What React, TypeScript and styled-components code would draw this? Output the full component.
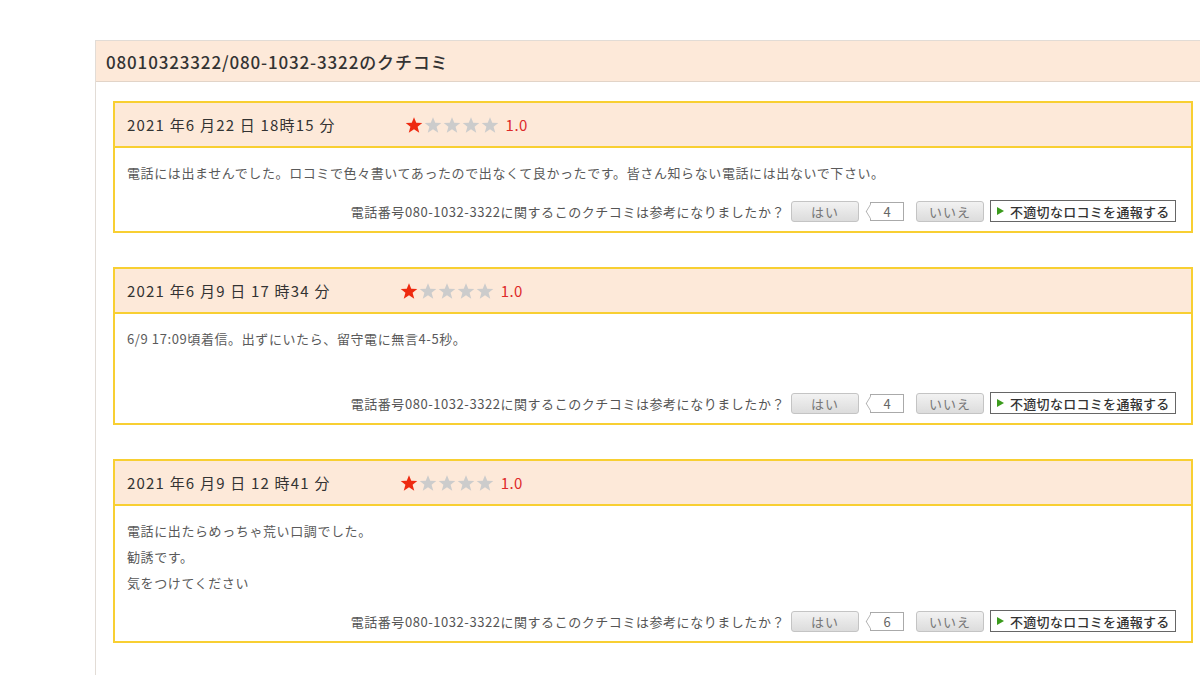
import React from 'react';
import styled, { createGlobalStyle } from 'styled-components';

const GlobalStyle = createGlobalStyle`
  html, body {
    margin: 0;
    padding: 0;
    background: #fff;
    overflow: hidden;
  }
  body {
    font-family: "Noto Sans CJK JP", "Noto Sans", sans-serif;
  }
`;

type Review = {
  date: string;
  score: number;
  lines: string[];
  count: number;
};

const reviews: Review[] = [
  {
    date: '2021 年6 月22 日 18時15 分',
    score: 1,
    lines: ['電話には出ませんでした。ロコミで色々書いてあったので出なくて良かったです。皆さん知らない電話には出ないで下さい。'],
    count: 4,
  },
  {
    date: '2021 年6 月9 日 17 時34 分',
    score: 1,
    lines: ['6/9 17:09頃着信。出ずにいたら、留守電に無言4-5秒。', ''],
    count: 4,
  },
  {
    date: '2021 年6 月9 日 12 時41 分',
    score: 1,
    lines: ['電話に出たらめっちゃ荒い口調でした。', '勧誘です。', '気をつけてください'],
    count: 6,
  },
];

function Star({ on }: { on: boolean }) {
  return (
    <StarIcon viewBox="0 0 24 24" $on={on}>
      <polygon points="12,1.5 15,9 23,9.3 16.8,14.3 19,22.3 12,17.8 5,22.3 7.2,14.3 1,9.3 9,9" />
    </StarIcon>
  );
}

function ReviewCard({ review }: { review: Review }) {
  return (
    <Card>
      <CardHeader>
        <DateText>{review.date}</DateText>
        <Stars>
          {[1, 2, 3, 4, 5].map((n) => (
            <Star key={n} on={n <= review.score} />
          ))}
        </Stars>
        <Score>{review.score.toFixed(1)}</Score>
      </CardHeader>
      <CardBody>
        {review.lines.map((line, i) => (
          <Line key={i}>{line || '\u00a0'}</Line>
        ))}
        <VoteRow>
          <Question>電話番号080-1032-3322に関するこのクチコミは参考になりましたか？</Question>
          <VoteButton>はい</VoteButton>
          <Count>{review.count}</Count>
          <VoteButton>いいえ</VoteButton>
          <ReportButton>
            <Triangle />
            不適切なロコミを通報する
          </ReportButton>
        </VoteRow>
      </CardBody>
    </Card>
  );
}

function App() {
  return (
    <>
      <GlobalStyle />
      <Page>
        <Panel>
          <PanelHeader>08010323322/080-1032-3322のクチコミ</PanelHeader>
          <PanelBody>
            {reviews.map((r, i) => (
              <ReviewCard key={i} review={r} />
            ))}
          </PanelBody>
        </Panel>
      </Page>
    </>
  );
}

const Page = styled.div`
  width: 1200px;
  height: 675px;
  overflow: hidden;
  padding-top: 40px;
  box-sizing: border-box;
`;

const Panel = styled.div`
  margin-left: 95px;
  width: 1120px;
  border: 1px solid #e2dcd6;
  border-right: none;
  min-height: 700px;
`;

const PanelHeader = styled.div`
  height: 40px;
  background: #fde9d9;
  border-bottom: 1px solid #e2d4c8;
  display: flex;
  align-items: center;
  padding-left: 10px;
  font-size: 17px;
  font-weight: 500;
  letter-spacing: 0.85px;
  color: #333;
`;

const PanelBody = styled.div`
  padding: 19px 0 0 17px;
  display: flex;
  flex-direction: column;
  gap: 34px;
`;

const Card = styled.div`
  width: 1080px;
  box-sizing: border-box;
  border: 2px solid #f8cf32;
`;

const CardHeader = styled.div`
  height: 43px;
  background: #fde9d9;
  border-bottom: 2px solid #f8cf32;
  display: flex;
  align-items: center;
  padding-left: 12px;
`;

const DateText = styled.div`
  font-size: 15px;
  letter-spacing: 1.2px;
  color: #333;
  margin-right: 69px;
`;

const Stars = styled.div`
  display: flex;
  gap: 1px;
`;

const StarIcon = styled.svg<{ $on: boolean }>`
  width: 18px;
  height: 18px;
  fill: ${(p) => (p.$on ? '#ee2a10' : '#cccccc')};
`;

const Score = styled.div`
  margin-left: 7px;
  font-size: 15px;
  letter-spacing: 0.5px;
  color: #dd2a2a;
`;

const CardBody = styled.div`
  padding: 12px 15px 9px 12px;
`;

const Line = styled.div`
  font-size: 13px;
  line-height: 26px;
  letter-spacing: 0.6px;
  color: #5a5a5a;
`;

const VoteRow = styled.div`
  margin-top: 14px;
  height: 22px;
  display: flex;
  align-items: center;
  justify-content: flex-end;
`;

const Question = styled.div`
  font-size: 13px;
  letter-spacing: 0.55px;
  color: #555;
  margin-right: 6px;
`;

const VoteButton = styled.div`
  width: 68px;
  height: 21px;
  box-sizing: border-box;
  border: 1px solid #c4c4c4;
  border-radius: 3px;
  background: linear-gradient(#f2f2f2, #dcdcdc);
  display: flex;
  align-items: center;
  justify-content: center;
  font-size: 13px;
  letter-spacing: 1px;
  color: #777;
`;

const Count = styled.div`
  position: relative;
  margin: 0 12px 0 11px;
  width: 34px;
  height: 19px;
  box-sizing: border-box;
  border: 1px solid #aaa;
  background: #fff;
  display: flex;
  align-items: center;
  justify-content: center;
  font-size: 13px;
  color: #666;

  &::before {
    content: '';
    position: absolute;
    left: -6px;
    top: 3px;
    width: 10px;
    height: 10px;
    background: #fff;
    border-left: 1px solid #aaa;
    border-bottom: 1px solid #aaa;
    transform: scaleX(0.6) rotate(45deg);
  }
`;

const ReportButton = styled.div`
  margin-left: 6px;
  width: 186px;
  height: 22px;
  box-sizing: border-box;
  border: 1px solid #666;
  background: #fff;
  display: flex;
  align-items: center;
  padding-left: 6px;
  gap: 6px;
  font-size: 13px;
  font-weight: 500;
  letter-spacing: 0.3px;
  color: #333;
`;

const Triangle = styled.span`
  width: 0;
  height: 0;
  border-top: 4px solid transparent;
  border-bottom: 4px solid transparent;
  border-left: 7px solid #3b9b1c;
`;

export default App;
